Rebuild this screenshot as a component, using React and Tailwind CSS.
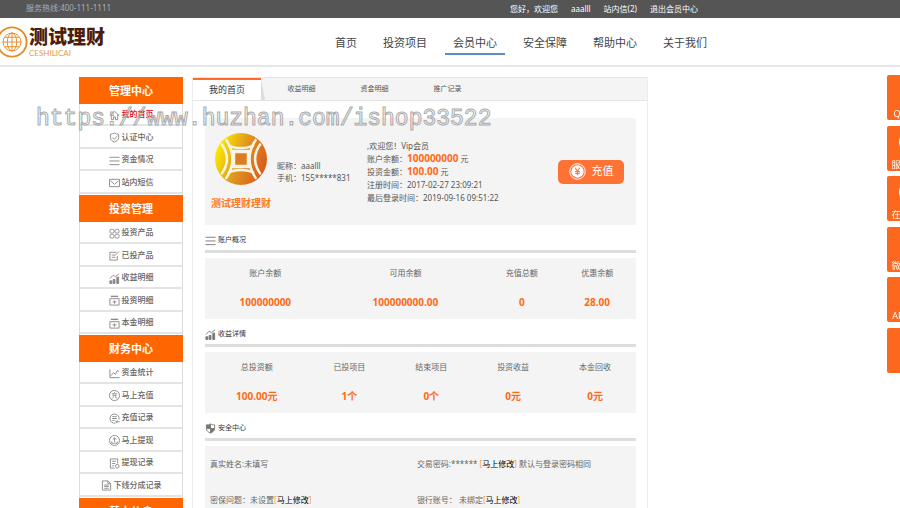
// App.jsx
const topLinks = ["aaalll", "站内信(2)", "退出会员中心"];

const navItems = ["首页", "投资项目", "会员中心", "安全保障", "帮助中心", "关于我们"];

const menuGroups = [
  {
    title: "管理中心",
    items: [
      { name: "我的首页", icon: "home", active: true },
      { name: "认证中心", icon: "shield" },
      { name: "资金情况", icon: "lines" },
      { name: "站内短信", icon: "mail" },
    ],
  },
  {
    title: "投资管理",
    items: [
      { name: "投资产品", icon: "grid" },
      { name: "已投产品", icon: "edit" },
      { name: "收益明细", icon: "bars" },
      { name: "投资明细", icon: "box" },
      { name: "本金明细", icon: "box" },
    ],
  },
  {
    title: "财务中心",
    items: [
      { name: "资金统计", icon: "trend" },
      { name: "马上充值", icon: "charge" },
      { name: "充值记录", icon: "record" },
      { name: "马上提现", icon: "upload" },
      { name: "提现记录", icon: "history" },
      { name: "下线分成记录", icon: "file" },
    ],
  },
  { title: "基本信息", items: [] },
];

const tabs = ["收益明细", "资金明细", "推广记录"];

const account = [
  { label: "账户余额", value: "100000000", width: "w-[28%]" },
  { label: "可用余额", value: "100000000.00", width: "w-[37%]" },
  { label: "充值总额", value: "0", width: "w-[17%]" },
  { label: "优惠余额", value: "28.00", width: "w-[18%]" },
];

const income = [
  { label: "总投资额", value: "100.00元", width: "w-[24%]" },
  { label: "已投项目", value: "1个", width: "w-[19%]" },
  { label: "结束项目", value: "0个", width: "w-[19%]" },
  { label: "投资收益", value: "0元", width: "w-[19%]" },
  { label: "本金回收", value: "0元", width: "w-[19%]" },
];

const floatItems = [
  { name: "QQ客服" },
  { name: "服务热线", dot: true },
  { name: "在线客服", dot: true },
  { name: "微信关注" },
  { name: "APP下载" },
  { name: "" },
];

// All line icons share a 24 unit box
const icons = {
  home: <path d="M2 12 12 3l10 9M5 10v11h5v-6h4v6h5V10" />,
  shield: <path d="M12 2c3 2 6 3 9 3v7c0 5-4 8-9 10-5-2-9-5-9-10V5c3 0 6-1 9-3zM7 12l4 4 7-7" />,
  lines: <path d="M1 5h22M1 13h22M1 21h22" />,
  mail: <path d="M1 5h22v16H1zM3 8l9 8 9-8" />,
  grid: (
    <>
      <rect x="2" y="3" width="9" height="8" rx="3" />
      <rect x="13" y="3" width="9" height="8" rx="3" />
      <rect x="2" y="14" width="9" height="8" rx="3" />
      <rect x="13" y="14" width="9" height="8" rx="3" />
    </>
  ),
  edit: <path d="M18 13v9H2V5h14M6 11h7M6 16h8M13 12l9-9" />,
  bars: (
    <>
      <path d="M2 12 9 5l5 3 8-6" />
      <path d="M2 17h4v6H2zM9 14h4v9H9zM17 9h4v14h-4z" fill="currentColor" />
    </>
  ),
  box: (
    <>
      <path d="M4 3h16" strokeWidth="3" />
      <path d="M2 8h20v14H2zM12 12v7M8 15h8" />
    </>
  ),
  trend: <path d="M2 3v18h21M4 17l6-7 4 4 4-8 4 1" />,
  charge: (
    <>
      <circle cx="12" cy="12" r="11" />
      <path d="M12 4v3M6 8h12M10 8l-2 4h8l-2-4M10 12c0 4-1 5-4 6M14 12v5h4" strokeWidth="1.500" />
    </>
  ),
  record: <path d="M22 14a10 10 0 1 0-8 8M7 8h10M7 12h10M7 16h5M15 19h8M18 16l-3 3 3 3" />,
  upload: (
    <>
      <circle cx="12" cy="12" r="11" />
      <path d="M12 15V6M8 10l4-4 4 4M6 14v4h12v-4" />
    </>
  ),
  history: (
    <>
      <path d="M12 22H3V2h16v10M7 7h8M7 12h7M7 17h4" />
      <circle cx="18" cy="18" r="4" />
    </>
  ),
  file: <path d="M3 2h12l6 6v14H3zM15 2v6h6M7 11h10M7 14h10M7 18h10" />,
  guard: (
    <>
      <path d="M12 2c3 2 6 2 9 2v8c0 5-4 8-9 10-5-2-9-5-9-10V4c3 0 6 0 9-2z" />
      <path d="M12 3v9h8c0 4-4 8-8 9v-9H4V5c3 0 6 0 8-2z" fill="currentColor" />
    </>
  ),
};

function Icon({ name, className }) {
  return (
    <svg
      viewBox="0 0 24 24"
      fill="none"
      stroke="currentColor"
      strokeWidth="2"
      aria-hidden="true"
      className={className}
    >
      {icons[name]}
    </svg>
  );
}

function TopBar() {
  return (
    <div className="flex h-[18px] items-center justify-between bg-[#555] pl-[26px] pr-[202px] text-[8px]">
      <span className="pb-[3px] text-[#a5aeb6]">服务热线:400-111-1111</span>
      <div className="flex gap-[13px] text-white">
        <span>您好，欢迎您</span>
        {topLinks.map((name) => (
          <a key={name} href="#">{name}</a>
        ))}
      </div>
    </div>
  );
}

function Logo() {
  return (
    <a href="#" className="-ml-1 flex items-center gap-[1px]">
      <svg viewBox="0 0 34 34" fill="none" stroke="#ea8a22" className="size-8">
        <circle cx="17" cy="17" r="15.5" strokeWidth="2" />
        <circle cx="17" cy="17" r="9.5" />
        <ellipse cx="17" cy="17" rx="5" ry="9.5" />
        <path d="M17 7v20M7 17h20M9 12h16M9 22h16" />
      </svg>
      <span className="flex flex-col">
        <span className="text-[19px] font-black leading-[22px] text-[#4c1d08]">测试理财</span>
        <span className="font-['Lato'] text-[8px] leading-[10px] text-[#e79a4b]">CESHILICAI</span>
      </span>
    </a>
  );
}

function Header() {
  return (
    <header className="flex h-[49px] items-center border-b-2 border-[#e6e6e6]">
      <Logo />
      <nav className="ml-auto flex gap-[10px] pr-[185px] pt-[5px]">
        {navItems.map((name) => (
          <a
            key={name}
            href="#"
            className={`border-b-2 px-2 pb-[1px] text-[11px] leading-[18px] text-[#444] ${
              name === "会员中心" ? "border-[#5b8dc3]" : "border-transparent"
            }`}
          >
            {name}
          </a>
        ))}
      </nav>
    </header>
  );
}

function Sidebar() {
  return (
    <aside className="w-[104px] shrink-0">
      {menuGroups.map((group) => (
        <section key={group.title}>
          <h2 className="bg-[#ff6600] text-center text-[11px] font-bold leading-[27px] text-white">
            {group.title}
          </h2>
          <ul className="border-x border-[#ddd] pb-[1px]">
            {group.items.map((item) => (
              <li key={item.name} className="h-[22px] border-b-2 border-[#e4e4e4] even:h-[23px]">
                <a
                  href="#"
                  className={`flex h-full items-center justify-center gap-[2px] text-[8px] font-medium ${
                    item.active ? "font-bold text-[#e60000]" : "text-[#666]"
                  }`}
                >
                  <Icon name={item.icon} className="mt-[2px] size-[11px] text-[#888]" />
                  {item.name}
                </a>
              </li>
            ))}
          </ul>
        </section>
      ))}
    </aside>
  );
}

function Tabs() {
  return (
    <nav className="flex h-6 border-y border-[#e5e5e5] bg-[#f4f4f4] text-[#555]">
      <a
        href="#"
        className="w-[68px] border-t-2 border-[#ff6a26] bg-white text-center text-[9px] leading-[20px] text-[#333]"
      >
        我的首页
      </a>
      <svg viewBox="0 0 4 22" className="h-full w-1" aria-hidden="true">
        <path d="M0 0 4 22H0z" fill="#ddd" />
      </svg>
      {tabs.map((name) => (
        <a key={name} href="#" className="w-[73px] text-center text-[7px] leading-[22px]">
          {name}
        </a>
      ))}
    </nav>
  );
}

function Coin() {
  return (
    <svg viewBox="0 0 52 52" className="size-[52px]" aria-hidden="true">
      <defs>
        <linearGradient id="gold" x1="0" y1="0.3" x2="1" y2="0.7">
          <stop offset="0" stopColor="#fdf000" />
          <stop offset="0.5" stopColor="#e0951e" />
          <stop offset="1" stopColor="#d9541c" />
        </linearGradient>
        <clipPath id="coin">
          <circle cx="26" cy="26" r="25" />
        </clipPath>
      </defs>
      <circle cx="26" cy="26" r="26" fill="url(#gold)" />
      <g clipPath="url(#coin)" fill="none" stroke="#f8f5e6" strokeWidth="2.5">
        <path d="M5 9c9 11 9 23 0 34M47 9c-9 11-9 23 0 34" />
        <path d="M10 5c10 14 10 28 0 42M42 5c-10 14-10 28 0 42" />
        <path d="M13 12c7 4 19 4 26 0M13 40c7-4 19-4 26 0" />
      </g>
      <path d="M18.500 18.500h15v15h-15z" fill="#dd7d22" stroke="#f8f5e6" strokeWidth="3.5" />
    </svg>
  );
}

function Profile() {
  return (
    <section className="flex h-[107px] items-center bg-[#f4f4f4] pl-[6px] pr-3 text-[8px] text-[#555]">
      <div className="flex w-[60px] flex-col items-center gap-[10px]">
        <Coin />
        <strong className="whitespace-nowrap text-[10px] leading-4 text-[#ff7a1e]">测试理财理财</strong>
      </div>
      <div className="w-24 pl-[6px] leading-3">
        <p>昵称：aaalll</p>
        <p>手机：155*****831</p>
      </div>
      <div className="leading-[13px]">
        <p>,欢迎您！Vip会员</p>
        <p>
          账户余额：<b className="text-[10px] text-[#ff6a13]">100000000</b> 元
        </p>
        <p>
          投资金额：<b className="text-[10px] text-[#ff6a13]">100.00</b> 元
        </p>
        <p>注册时间：2017-02-27 23:09:21</p>
        <p>最后登录时间：2019-09-16 09:51:22</p>
      </div>
      <button
        type="button"
        className="ml-auto flex h-6 w-[66px] items-center justify-center gap-[6px] rounded-[5px] bg-[#ff7235] text-[11px] text-white"
      >
        <svg viewBox="0 0 18 18" className="size-[17px]" aria-hidden="true">
          <circle cx="9" cy="9" r="8.2" fill="none" stroke="#fff" />
          <circle cx="9" cy="9" r="6.5" fill="#fff" />
          <path d="M6.500 5 9 8.500l2.500-3.500M9 8.500V13M6.500 9h5M6.500 11h5" fill="none" stroke="#ff7235" strokeWidth="1.2" />
        </svg>
        充值
      </button>
    </section>
  );
}

function SectionTitle({ icon, children }) {
  return (
    <h3 className="mb-[5px] flex h-7 items-center gap-[2px] border-b-3 border-[#ddd] pt-[6px] text-[7px] text-[#333]">
      <Icon name={icon} className="size-[11px] text-[#777]" />
      {children}
    </h3>
  );
}

function Stats({ data }) {
  return (
    <div className="h-[61px] bg-[#f4f4f4]">
      <table className="w-full table-fixed text-center">
        <thead>
          <tr className="h-[30px] text-[8px] text-[#666]">
            {data.map((col) => (
              <th key={col.label} className={`font-normal ${col.width}`}>{col.label}</th>
            ))}
          </tr>
        </thead>
        <tbody>
          <tr className="h-[29px] text-[10px] font-bold text-[#ff6a13]">
            {data.map((col) => (
              <td key={col.label}>{col.value}</td>
            ))}
          </tr>
        </tbody>
      </table>
    </div>
  );
}

function EditLink() {
  return (
    <a href="#" className="text-[#ff9a2e]">
      [<span className="text-black">马上修改</span>]
    </a>
  );
}

function Security() {
  return (
    <table className="w-full table-fixed bg-[#f4f4f4] text-[8px] text-[#666]">
      <tbody>
        <tr className="h-9">
          <td className="w-[48%] pl-[5px]">真实姓名:未填写</td>
          <td className="pl-[5px]">交易密码:****** <EditLink /> 默认与登录密码相同</td>
        </tr>
        <tr className="h-9">
          <td className="pl-[5px]">密保问题：未设置<EditLink /></td>
          <td className="pl-[5px]">银行账号： 未绑定<EditLink /></td>
        </tr>
      </tbody>
    </table>
  );
}

function FloatBar() {
  return (
    <aside className="fixed right-0 top-[75px] flex h-[298px] w-[13px] flex-col justify-between overflow-hidden">
      {floatItems.map((item, i) => (
        <a
          key={i}
          href="#"
          className="flex h-[45px] w-[45px] flex-col items-center justify-end rounded-[2px] bg-[#fb681e] text-[9px] leading-3 text-white"
        >
          {item.dot && (
            <svg viewBox="0 0 22 22" className="mb-[6px] size-[22px]" fill="currentColor" aria-hidden="true">
              <circle cx="11" cy="11" r="11" />
            </svg>
          )}
          <span className="whitespace-nowrap">{item.name}</span>
        </a>
      ))}
    </aside>
  );
}

export default function App() {
  return (
    <div className="relative h-screen overflow-hidden bg-white font-['Noto_Sans','Noto_Sans_CJK_SC',sans-serif]">
      <TopBar />
      <Header />

      <div className="flex gap-[9px] pl-[79px] pr-[252px] pt-[10px]">
        <Sidebar />
        <main className="min-w-0 flex-1 border-x border-[#ececec]">
          <Tabs />
          <div className="pb-3 pl-3 pr-[11px] pt-[17px]">
            <Profile />
            <SectionTitle icon="lines">账户概况</SectionTitle>
            <Stats data={account} />
            <SectionTitle icon="bars">收益详情</SectionTitle>
            <Stats data={income} />
            <SectionTitle icon="guard">安全中心</SectionTitle>
            <Security />
          </div>
        </main>
      </div>

      <FloatBar />

      {/* Watermark */}
      <p className="pointer-events-none absolute left-9 top-[105px] font-['Liberation_Mono',monospace] text-[23px] leading-7 text-transparent [-webkit-text-stroke:1px_#aaa]">
        https://www.huzhan.com/ishop33522
      </p>
    </div>
  );
}
